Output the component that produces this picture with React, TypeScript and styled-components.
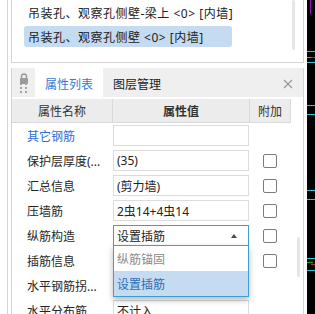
import React from "react";
import styled, { createGlobalStyle } from "styled-components";

const GlobalStyle = createGlobalStyle`
  html, body {
    margin: 0;
    padding: 0;
    background: #ffffff;
  }
  body {
    width: 315px;
    height: 314px;
    overflow: hidden;
    font-family: "Noto Sans", "Noto Sans CJK SC", sans-serif;
    font-size: 12px;
    color: #222222;
  }
  * {
    box-sizing: border-box;
  }
`;

const BORDER = "#d5d5d5";
const BLUE_EDGE = "#3c9fd3";
const SELECTED_BG = "#c4dbf1";

const Frame = styled.div`
  display: flex;
  width: 315px;
  height: 314px;
  overflow: hidden;
  background: #ffffff;
`;

const Gutter = styled.div`
  width: 8px;
  border-right: 1px solid ${BORDER};
`;

const Dock = styled.div`
  flex: 1;
  display: flex;
  flex-direction: column;
  gap: 5px;
  padding: 0 3px;
`;

const ListPanel = styled.div`
  position: relative;
  height: 63px;
  flex-shrink: 0;
  border: 1px solid ${BORDER};
  border-top: none;
  padding: 2px 0 0 12px;
  display: flex;
  flex-direction: column;
  gap: 3px;
`;

const ListItem = styled.div<{ $selected?: boolean }>`
  width: 208px;
  height: 21px;
  padding-left: 4px;
  display: flex;
  align-items: center;
  white-space: nowrap;
  letter-spacing: 0.5px;
  border-radius: 3px;
  background: ${(p) => (p.$selected ? SELECTED_BG : "transparent")};
`;

const ScrollThumb = styled.div<{ $top: number; $height: number; $right: number }>`
  position: absolute;
  top: ${(p) => p.$top}px;
  right: ${(p) => p.$right}px;
  width: 3px;
  height: ${(p) => p.$height}px;
  border-radius: 2px;
  background: #e6e6e6;
`;

const PropPanel = styled.div`
  position: relative;
  flex: 1;
  border: 1px solid ${BORDER};
  border-top: none;
  display: flex;
  flex-direction: column;
`;

const TabBar = styled.div`
  height: 29px;
  flex-shrink: 0;
  background: #efefef;
  display: flex;
  align-items: stretch;
`;

const Grip = styled.div`
  width: 23px;
  display: flex;
  align-items: flex-start;
  justify-content: center;
  padding-top: 4px;
`;

const Tab = styled.div<{ $active?: boolean }>`
  display: flex;
  align-items: center;
  justify-content: center;
  padding-top: 3px;
  width: ${(p) => (p.$active ? "68px" : "auto")};
  padding-left: ${(p) => (p.$active ? "0" : "10px")};
  background: ${(p) => (p.$active ? "#ffffff" : "transparent")};
  color: ${(p) => (p.$active ? "#3479d6" : "#222222")};
`;

const CloseBtn = styled.div`
  margin-left: auto;
  margin-right: 10px;
  display: flex;
  align-items: center;
  padding-top: 2px;
`;

const Grid = styled.div<{ $height: number }>`
  display: grid;
  grid-template-columns: 101px 137px 41px;
  height: ${(p) => p.$height}px;
  flex-shrink: 0;
`;

const HeaderRow = styled(Grid)`
  margin-top: 2px;
`;

const HeadCell = styled.div<{ $bold?: boolean }>`
  display: flex;
  align-items: center;
  justify-content: center;
  background: #ececec;
  border-right: 1px solid #d9d9d9;
  border-bottom: 1px solid #d9d9d9;
  font-weight: ${(p) => (p.$bold ? 700 : 400)};
  color: #333333;
`;

const NameCell = styled.div<{ $link?: boolean }>`
  display: flex;
  align-items: center;
  padding-left: 15px;
  white-space: nowrap;
  color: ${(p) => (p.$link ? "#2f6bd3" : "#262626")};
`;

const ValueCell = styled.div`
  padding: 2px 1px 0 0;
`;

const ValueBox = styled.div<{ $focused?: boolean }>`
  position: relative;
  height: 21px;
  border: 1px solid ${(p) => (p.$focused ? BLUE_EDGE : "#dcdcdc")};
  background: #ffffff;
  padding-left: 3px;
  display: flex;
  align-items: center;
  white-space: nowrap;
  color: #222222;
`;

const Caret = styled.span`
  margin-left: auto;
  margin-right: 11px;
  width: 0;
  height: 0;
  border-left: 3px solid transparent;
  border-right: 3px solid transparent;
  border-bottom: 4px solid #4a4a4a;
`;

const Dropdown = styled.div`
  position: absolute;
  top: 19px;
  left: -1px;
  width: 136px;
  height: 52px;
  border: 1px solid ${BLUE_EDGE};
  background: #ffffff;
  box-shadow: 0 3px 6px rgba(0, 0, 0, 0.28);
  z-index: 10;
  display: flex;
  flex-direction: column;
`;

const Option = styled.div<{ $selected?: boolean }>`
  height: 25px;
  padding-left: 3px;
  display: flex;
  align-items: center;
  background: ${(p) => (p.$selected ? SELECTED_BG : "#ffffff")};
  color: ${(p) => (p.$selected ? "#2d6db4" : "#8a8a8a")};
`;

const CheckCell = styled.div`
  display: flex;
  align-items: center;
  justify-content: center;
  padding-right: 1px;
`;

const Check = styled.span`
  width: 14px;
  height: 14px;
  border: 1px solid #7c7c7c;
  border-radius: 2px;
  background: #ffffff;
`;

const Canvas = styled.div`
  width: 8px;
  flex-shrink: 0;
  background: #000000;
`;

type Row = {
  name: string;
  value?: string;
  link?: boolean;
  check?: boolean;
  select?: boolean;
};

const rows: Row[] = [
  { name: "其它钢筋", value: "", link: true },
  { name: "保护层厚度(...", value: "(35)", check: true },
  { name: "汇总信息", value: "(剪力墙)", check: true },
  { name: "压墙筋", value: "2虫14+4虫14", check: true },
  { name: "纵筋构造", value: "设置插筋", check: true, select: true },
  { name: "插筋信息", check: true },
  { name: "水平钢筋拐..." },
  { name: "水平分布筋...", value: "不计入" },
];

const LockIcon = () => (
  <svg width="12" height="22" viewBox="0 0 12 22">
    <path d="M3.5 6 V4.5 a2.5 2.5 0 0 1 5 0 V6" fill="none" stroke="#9a9a9a" strokeWidth="1.4" />
    <rect x="2" y="6" width="8" height="6" rx="1" fill="#9a9a9a" />
    {[12, 16, 20].map((y) => (
      <g key={y} fill="#a3a3a3">
        <rect x="2" y={y - 1} width="2" height="2" />
        <rect x="7" y={y - 1} width="2" height="2" />
      </g>
    ))}
  </svg>
);

const CloseIcon = () => (
  <svg width="10" height="10" viewBox="0 0 10 10">
    <path d="M1 1 L9 9 M9 1 L1 9" stroke="#9b9b9b" strokeWidth="1.2" />
  </svg>
);

const CanvasDrawing = () => (
  <svg width="8" height="314" viewBox="0 0 8 314">
    <line x1="3.5" y1="0" x2="3.5" y2="14" stroke="#a010b8" strokeWidth="1" />
    {[51.5, 62.5, 105.5, 114.5, 190.5, 199.5, 258.5, 270.5].map((y) => (
      <line key={y} x1="0" y1={y} x2="8" y2={y} stroke="#2bc6d6" strokeWidth="1" />
    ))}
    <line x1="0" y1="57.5" x2="4" y2="57.5" stroke="#8a8a8a" strokeWidth="1" />
    <line x1="4" y1="57.5" x2="8" y2="57.5" stroke="#d22020" strokeWidth="1" />
    <line x1="0" y1="262.5" x2="6" y2="262.5" stroke="#1a9a2a" strokeWidth="1.5" />
    <line x1="4" y1="264.5" x2="8" y2="264.5" stroke="#d22020" strokeWidth="1" />
  </svg>
);

const App = () => {
  return (
    <>
      <GlobalStyle />
      <Frame>
        <Gutter />
        <Dock>
          <ListPanel>
            <ListItem>吊装孔、观察孔侧壁-梁上 &lt;0&gt; [内墙]</ListItem>
            <ListItem $selected>吊装孔、观察孔侧壁 &lt;0&gt; [内墙]</ListItem>
            <ScrollThumb $top={0} $height={50} $right={8} />
          </ListPanel>

          <PropPanel>
            <TabBar>
              <Grip>
                <LockIcon />
              </Grip>
              <Tab $active>属性列表</Tab>
              <Tab>图层管理</Tab>
              <CloseBtn>
                <CloseIcon />
              </CloseBtn>
            </TabBar>

            <HeaderRow $height={24}>
              <HeadCell>属性名称</HeadCell>
              <HeadCell $bold>属性值</HeadCell>
              <HeadCell>附加</HeadCell>
            </HeaderRow>

            {rows.map((row) => (
              <Grid $height={25} key={row.name}>
                <NameCell $link={row.link}>{row.name}</NameCell>
                <ValueCell>
                  {row.value !== undefined && (
                    <ValueBox $focused={row.select}>
                      {row.value}
                      {row.select && (
                        <>
                          <Caret />
                          <Dropdown>
                            <Option>纵筋锚固</Option>
                            <Option $selected>设置插筋</Option>
                          </Dropdown>
                        </>
                      )}
                    </ValueBox>
                  )}
                </ValueCell>
                <CheckCell>{row.check && <Check />}</CheckCell>
              </Grid>
            ))}

            <ScrollThumb $top={169} $height={40} $right={3} />
          </PropPanel>
        </Dock>
        <Canvas>
          <CanvasDrawing />
        </Canvas>
      </Frame>
    </>
  );
};

export default App;
